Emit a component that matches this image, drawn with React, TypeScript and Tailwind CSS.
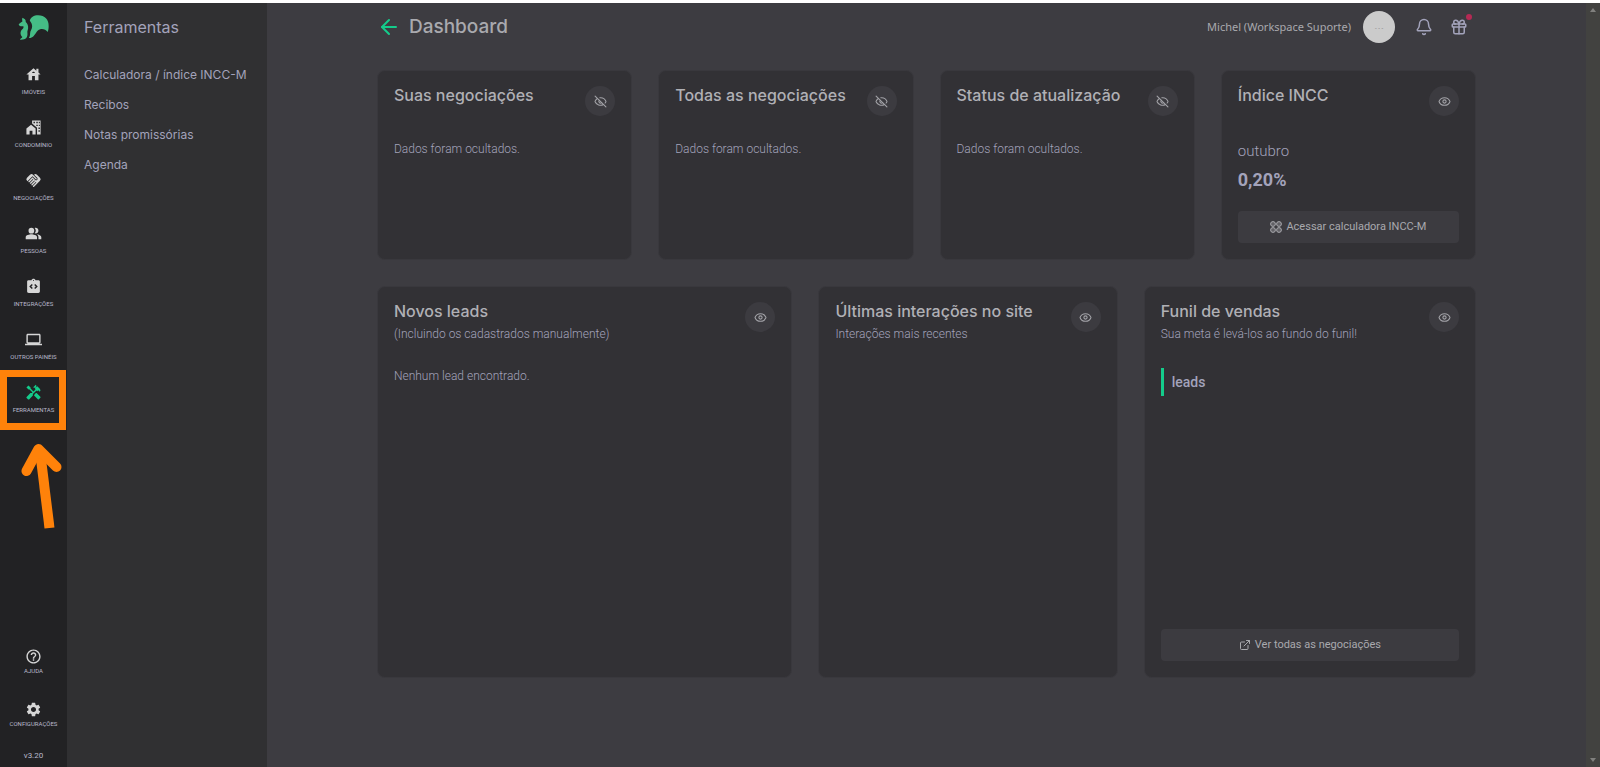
import type { ComponentType, ReactNode } from 'react';
import {
  MdComputer,
  MdHandshake,
  MdHandyman,
  MdHelpOutline,
  MdHouse,
  MdIntegrationInstructions,
  MdPeopleAlt,
  MdSettings,
} from 'react-icons/md';
import { ArrowLeft, Bell, ExternalLink, Eye, EyeOff, Gift } from 'lucide-react';

type NavItem = {
  label: string;
  icon: ComponentType<{ className?: string }>;
  active?: boolean;
};

function CondoIcon({ className }: { className?: string }) {
  return (
    <svg viewBox="0 0 24 24" className={className} fill="currentColor" aria-hidden="true">
      <path d="M2 13.500L8.500 8L15 13.500V22H10.500V16.500H6.500V22H2Z" />
      <path
        fillRule="evenodd"
        d="M10 2H22V22H17V12.500L10 6.500ZM12 4V6H14V4ZM16 4V6H18V4ZM16 8V10H18V8ZM19 12V14H21V12ZM19 16V18H21V16ZM19.500 4V6H21V4ZM19.500 8V10H21V8Z"
      />
    </svg>
  );
}

const mainNav: NavItem[] = [
  { label: 'Imóveis', icon: MdHouse },
  { label: 'Condomínio', icon: CondoIcon },
  { label: 'Negociações', icon: MdHandshake },
  { label: 'Pessoas', icon: MdPeopleAlt },
  { label: 'Integrações', icon: MdIntegrationInstructions },
  { label: 'Outros painéis', icon: MdComputer },
  { label: 'Ferramentas', icon: MdHandyman, active: true },
];

const footerNav: NavItem[] = [
  { label: 'Ajuda', icon: MdHelpOutline },
  { label: 'Configurações', icon: MdSettings },
];

const tools = [
  'Calculadora / índice INCC-M',
  'Recibos',
  'Notas promissórias',
  'Agenda',
];

const hiddenCards = [
  'Suas negociações',
  'Todas as negociações',
  'Status de atualização',
];

function Logo() {
  return (
    <svg viewBox="54 44 92 74" className="h-[25px] w-[31px]" fill="#45bd86" aria-label="Logo">
      <path d="M67 52C73 54 78 58 77 65C82 70 85 76 84 84C83 89 81 92 82 98C83 110 78 118 60 117C60 113 66 113 67 109C60 104 60 93 66 87C70 83 71 81 70 77C65 78 57 77 56 72C58 70 62 65 67 63C66 59 66 56 67 52Z" />
      <path d="M89 61C91 51 101 45 114 45C133 45 146 58 145 77C145 84 144 90 142 94C137 87 128 84 120 86C109 89 106 103 97 109C93 112 89 112 86 112C89 108 90 103 90 98C90 91 96 85 96 77C96 71 93 66 89 61Z" />
    </svg>
  );
}

function CommandGrid() {
  return (
    <svg
      viewBox="0 0 12 12"
      className="size-3"
      fill="currentColor"
      fillOpacity="0.35"
      stroke="currentColor"
      aria-hidden="true"
    >
      <circle cx="3" cy="3" r="2.400" />
      <circle cx="9" cy="3" r="2.400" />
      <circle cx="3" cy="9" r="2.400" />
      <circle cx="9" cy="9" r="2.400" />
    </svg>
  );
}

function RailLink({ label, icon: Icon, active, compact }: NavItem & { compact?: boolean }) {
  return (
    <a
      href="#"
      className={
        compact
          ? 'flex h-[53px] flex-col items-center gap-[1px] pt-1'
          : 'flex h-[53px] flex-col items-center gap-1'
      }
    >
      <Icon
        className={active ? 'size-[17px] text-[#14cc8b]' : 'size-[17px] text-[#d6d6d6]'}
      />
      <span className="whitespace-nowrap text-[6px] leading-[10px] uppercase text-[#b9b9cc]">
        {label}
      </span>
    </a>
  );
}

function Card({
  title,
  subtitle,
  hidden,
  children,
}: {
  title: string;
  subtitle?: string;
  hidden?: boolean;
  children?: ReactNode;
}) {
  const Icon = hidden ? EyeOff : Eye;

  return (
    <section className="flex flex-col rounded-lg border border-[#39383d] bg-[#323135] px-4 pt-[15px] pb-4">
      <div className="flex h-[52px] items-start justify-between">
        <div>
          <h2 className="font-[Inter,sans-serif] text-base leading-[18px] font-medium whitespace-nowrap text-[#b0b0b5]">
            {title}
          </h2>
          {subtitle && (
            <p className="mt-[6px] text-xs leading-4 font-light whitespace-nowrap text-[#a3a3bb]">
              {subtitle}
            </p>
          )}
        </div>
        <button
          type="button"
          aria-label={hidden ? 'Mostrar dados' : 'Ocultar dados'}
          className="flex size-[30px] shrink-0 items-center justify-center rounded-full bg-[#3c3b40] text-[#a3a3a8]"
        >
          <Icon className="size-[13px]" />
        </button>
      </div>
      {children}
    </section>
  );
}

function CardButton({ children }: { children: ReactNode }) {
  return (
    <button
      type="button"
      className="mt-auto flex h-8 w-full items-center justify-center gap-1 rounded bg-[#3c3b40] text-[11px] text-[#a9a9ae]"
    >
      {children}
    </button>
  );
}

export default function App() {
  return (
    <div className="flex min-h-screen border-t-[3px] border-white bg-[#3d3c41] font-[Roboto,sans-serif]">
      <aside className="relative flex w-[67px] shrink-0 flex-col items-center bg-[#222224] pt-3">
        <Logo />
        <nav className="mt-[26px]">
          {mainNav.map((item) => (
            <RailLink key={item.label} {...item} />
          ))}
        </nav>
        <nav className="mt-auto">
          {footerNav.map((item) => (
            <RailLink key={item.label} {...item} compact />
          ))}
        </nav>
        <p className="pb-[5px] text-[8px] leading-3 text-[#b9b9cc]">v3.20</p>

        {/* highlight over the active entry */}
        <div className="pointer-events-none absolute top-[367px] left-0 h-[60px] w-[66px] border-7 border-[#ff820a]" />
        <svg
          viewBox="0 0 42 88"
          className="absolute top-[440px] left-[21px] h-[88px] w-[42px]"
          fill="none"
          stroke="#ff820a"
          strokeWidth="10"
          strokeLinejoin="round"
        >
          <path d="M28.500 85L19 8" />
          <path d="M5.500 28L17.500 6L35.500 24" strokeLinecap="round" />
        </svg>
      </aside>

      <aside className="w-[200px] shrink-0 bg-[#303032] px-[17px] pt-3 font-[Inter,sans-serif] text-[#a3a3bb]">
        <h2 className="text-base leading-6">Ferramentas</h2>
        <ul className="mt-[21px] text-xs leading-[30px]">
          {tools.map((tool) => (
            <li key={tool}>
              <a href="#">{tool}</a>
            </li>
          ))}
        </ul>
      </aside>

      <main className="min-w-0 flex-1">
        <div className="mx-auto w-5/6">
          <header className="flex h-[67px] items-start justify-between pt-2">
            <div className="flex h-8 items-center gap-2">
              <button type="button" aria-label="Voltar">
                <ArrowLeft className="size-6 text-[#14cc8b]" />
              </button>
              <h1 className="font-[Inter,sans-serif] text-[19px] font-medium text-[#a9a9ae]">
                Dashboard
              </h1>
            </div>
            <div className="flex h-8 items-center text-[#a3a3bb]">
              <span className="font-['Noto_Sans',sans-serif] text-[11px] text-[#a9a9ae]">
                Michel (Workspace Suporte)
              </span>
              <span className="ml-3 flex size-8 items-center justify-center rounded-full bg-[#cbcbcb] text-[6px] text-[#777]">
                - - -
              </span>
              <button type="button" aria-label="Notificações" className="ml-5">
                <Bell className="size-[18px]" />
              </button>
              <button type="button" aria-label="Novidades" className="relative mr-2 ml-[17px]">
                <Gift className="size-[18px]" />
                <span className="absolute -top-1 -right-1 size-[6px] rounded-full bg-[#b52a54]" />
              </button>
            </div>
          </header>

          <div className="grid grid-cols-4 gap-[26px]">
            {hiddenCards.map((title) => (
              <Card key={title} title={title} hidden>
                <p className="mt-[3px] text-xs leading-4 font-light text-[#a3a3bb]">
                  Dados foram ocultados.
                </p>
              </Card>
            ))}
            <Card title="Índice INCC">
              <p className="mt-[3px] text-[15px] leading-5 font-light text-[#a3a3bb]">outubro</p>
              <p className="mt-[9px] mb-[21px] text-lg leading-5 font-bold text-[#a3a3bb]">0,20%</p>
              <CardButton>
                <CommandGrid />
                Acessar calculadora INCC-M
              </CardButton>
            </Card>
          </div>

          <div className="mt-[26px] grid min-h-[392px] grid-cols-[415fr_299fr_332fr] gap-[26px]">
            <Card title="Novos leads" subtitle="(Incluindo os cadastrados manualmente)">
              <p className="mt-[14px] text-xs leading-4 font-light text-[#a3a3bb]">
                Nenhum lead encontrado.
              </p>
            </Card>
            <Card title="Últimas interações no site" subtitle="Interações mais recentes" />
            <Card title="Funil de vendas" subtitle="Sua meta é levá-los ao fundo do funil!">
              <p className="mt-[14px] border-l-3 border-[#14cc8b] pl-2 text-sm leading-7 font-medium text-[#a3a3bb]">
                leads
              </p>
              <CardButton>
                <ExternalLink className="size-3" />
                Ver todas as negociações
              </CardButton>
            </Card>
          </div>
        </div>
      </main>

      <div className="flex w-[14px] shrink-0 flex-col items-center justify-between bg-[#424240] py-[5px]">
        <span className="border-x-3 border-b-4 border-x-transparent border-b-[#80807e]" />
        <span className="border-x-3 border-t-4 border-x-transparent border-t-[#80807e]" />
      </div>
    </div>
  );
}
